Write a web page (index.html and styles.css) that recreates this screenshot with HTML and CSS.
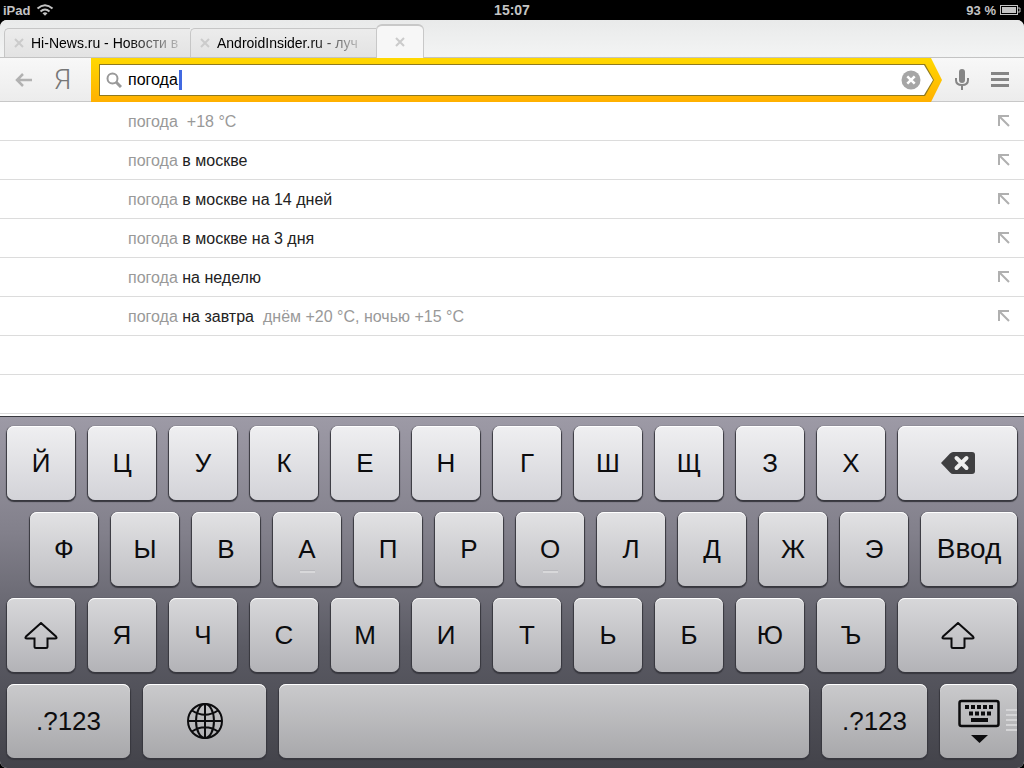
FILE: index.html
```html
<!DOCTYPE html>
<html lang="ru">
<head>
  <meta charset="UTF-8" />
  <meta name="viewport" content="width=device-width, initial-scale=1.0"/>
  <title>Новая вкладка</title>
  <link rel="stylesheet" href="styles.css">
</head>
<body>
  <header class="status">
    <div class="status-left">
      <span>iPad</span>
      <svg width="18" height="12" viewBox="0 0 18 12" fill="none" stroke="#c4c4c4" stroke-width="2">
        <path d="M1.500 4.500 Q9 -2 16.500 4.500"/>
        <path d="M4.500 7.500 Q9 3.500 13.500 7.500"/>
        <path d="M6.500 9.200 Q9 7.200 11.500 9.200 L9 11.800 Z" fill="#c4c4c4" stroke="none"/>
      </svg>
    </div>
    <div class="status-time">15:07</div>
    <div class="status-right">
      <span>93 %</span>
      <svg width="21" height="10" viewBox="0 0 21 10">
        <rect x="0.500" y="0.500" width="17" height="9" fill="none" stroke="#c4c4c4"/>
        <rect x="2" y="2" width="14" height="6" fill="#c4c4c4"/>
        <path d="M18 3h2v4h-2" fill="none" stroke="#c4c4c4"/>
      </svg>
    </div>
  </header>

  <main class="screen">
    <nav class="tabs">
      <div class="tab">
        <button class="tab-close" aria-label="Закрыть"><svg width="10" height="10" viewBox="0 0 10 10"><path d="M1 1l8 8M9 1l-8 8"/></svg></button>
        <a class="tab-title" href="#">Hi-News.ru - Новости в</a>
      </div>
      <div class="tab">
        <button class="tab-close" aria-label="Закрыть"><svg width="10" height="10" viewBox="0 0 10 10"><path d="M1 1l8 8M9 1l-8 8"/></svg></button>
        <a class="tab-title" href="#">AndroidInsider.ru - луч</a>
      </div>
      <div class="tab active">
        <button class="tab-close" aria-label="Закрыть"><svg width="10" height="10" viewBox="0 0 10 10"><path d="M1 1l8 8M9 1l-8 8"/></svg></button>
      </div>
    </nav>

    <form class="toolbar">
      <div class="nav-buttons">
        <button type="button" class="icon-btn" aria-label="Назад">
          <svg width="18" height="14" viewBox="0 0 18 14" fill="none" stroke="#b2b2b2" stroke-width="2.500"><path d="M17 7H2M8 1L2 7l6 6"/></svg>
        </button>
        <a class="logo" href="#">Я</a>
      </div>
      <div class="search-frame">
        <div class="search-line">
          <div class="search-box">
            <svg width="16" height="16" viewBox="0 0 16 16" fill="none" stroke="#999"><circle cx="6.500" cy="6.500" r="5" stroke-width="2"/><path d="M10 10l5 5" stroke-width="3"/></svg>
            <div class="search-field">
              <input class="search-input" type="text" aria-label="Поиск" value="погода">
              <span class="caret"></span>
            </div>
            <button type="reset" class="icon-btn" aria-label="Очистить">
              <svg width="20" height="20" viewBox="0 0 20 20"><circle cx="10" cy="10" r="9.500" fill="#a6a6a6"/><path d="M6.300 6.300l7.400 7.400M13.700 6.300l-7.400 7.400" stroke="#fff" stroke-width="2.500"/></svg>
            </button>
          </div>
        </div>
      </div>
      <div class="tools">
        <button type="button" class="icon-btn" aria-label="Голосовой поиск">
          <svg width="14" height="22" viewBox="0 0 14 22" fill="none" stroke="#858585"><rect x="4" y="0" width="6" height="14" rx="3" fill="#858585" stroke="none"/><path d="M1 9v2c0 3 2 5 6 5s6-2 6-5V9M7 16v5" stroke-width="2"/></svg>
        </button>
        <button type="button" class="icon-btn" aria-label="Меню">
          <svg width="18" height="15" viewBox="0 0 18 15" fill="#858585"><path d="M0 0h18v3H0zM0 6h18v3H0zM0 12h18v3H0z"/></svg>
        </button>
      </div>
    </form>

    <ul class="suggest">
      <li><a href="#"><span>погода</span><span class="hint">+18 °C</span><svg class="fill" width="12" height="12" viewBox="0 0 12 12"><path d="M1 11V1h10M1 1l10 10"/></svg></a></li>
      <li><a href="#"><span>погода <b>в москве</b></span><svg class="fill" width="12" height="12" viewBox="0 0 12 12"><path d="M1 11V1h10M1 1l10 10"/></svg></a></li>
      <li><a href="#"><span>погода <b>в москве на 14 дней</b></span><svg class="fill" width="12" height="12" viewBox="0 0 12 12"><path d="M1 11V1h10M1 1l10 10"/></svg></a></li>
      <li><a href="#"><span>погода <b>в москве на 3 дня</b></span><svg class="fill" width="12" height="12" viewBox="0 0 12 12"><path d="M1 11V1h10M1 1l10 10"/></svg></a></li>
      <li><a href="#"><span>погода <b>на неделю</b></span><svg class="fill" width="12" height="12" viewBox="0 0 12 12"><path d="M1 11V1h10M1 1l10 10"/></svg></a></li>
      <li><a href="#"><span>погода <b>на завтра</b></span><span class="hint">днём +20 °C, ночью +15 °C</span><svg class="fill" width="12" height="12" viewBox="0 0 12 12"><path d="M1 11V1h10M1 1l10 10"/></svg></a></li>
      <li></li>
      <li></li>
    </ul>

    <section class="keyboard">
      <div class="keys">
        <button class="key">Й</button>
        <button class="key">Ц</button>
        <button class="key">У</button>
        <button class="key">К</button>
        <button class="key">Е</button>
        <button class="key">Н</button>
        <button class="key">Г</button>
        <button class="key">Ш</button>
        <button class="key">Щ</button>
        <button class="key">З</button>
        <button class="key">Х</button>
        <button class="key wide" aria-label="Удалить">
          <svg width="34" height="22" viewBox="0 0 34 22"><path d="M0 11L9 1.500Q10.500 0 12 0H31q3 0 3 3v16q0 3-3 3H12q-1.500 0-3-1.500z" fill="#3f3f41"/><path d="M15.500 6l10 10M25.500 6l-10 10" stroke="#eee" stroke-width="4" stroke-linecap="round"/></svg>
        </button>
      </div>
      <div class="keys keys-home">
        <button class="key">Ф</button>
        <button class="key">Ы</button>
        <button class="key">В</button>
        <button class="key bump">А</button>
        <button class="key">П</button>
        <button class="key">Р</button>
        <button class="key bump">О</button>
        <button class="key">Л</button>
        <button class="key">Д</button>
        <button class="key">Ж</button>
        <button class="key">Э</button>
        <button class="key enter">Ввод</button>
      </div>
      <div class="keys keys-lower">
        <button class="key" aria-label="Shift">
          <svg width="34" height="27" viewBox="0 0 34 27"><path class="shift" d="M17 1L32 14.500Q33.500 16.500 31 16.500H23.500V24.500Q23.500 26 22 26H12Q10.500 26 10.500 24.500V16.500H3Q.5 16.500 2 14.500Z"/></svg>
        </button>
        <button class="key">Я</button>
        <button class="key">Ч</button>
        <button class="key">С</button>
        <button class="key">М</button>
        <button class="key">И</button>
        <button class="key">Т</button>
        <button class="key">Ь</button>
        <button class="key">Б</button>
        <button class="key">Ю</button>
        <button class="key">Ъ</button>
        <button class="key wide" aria-label="Shift">
          <svg width="34" height="27" viewBox="0 0 34 27"><path class="shift" d="M17 1L32 14.500Q33.500 16.500 31 16.500H23.500V24.500Q23.500 26 22 26H12Q10.500 26 10.500 24.500V16.500H3Q.5 16.500 2 14.500Z"/></svg>
        </button>
      </div>
      <div class="keys keys-bottom">
        <button class="key switch">.?123</button>
        <button class="key switch" aria-label="Язык">
          <svg width="36" height="36" viewBox="0 0 36 36" fill="none" stroke="#0c0c0e" stroke-width="2"><circle cx="18" cy="18" r="17"/><ellipse cx="18" cy="18" rx="9" ry="17"/><path d="M18 1v34M1 18h34M5 7.500Q18 16 31 7.500M5 28.500Q18 20 31 28.500"/></svg>
        </button>
        <button class="key space" aria-label="Пробел"></button>
        <button class="key switch-right">.?123</button>
        <button class="key hide" aria-label="Скрыть клавиатуру">
          <svg width="42" height="38" viewBox="0 0 42 38" fill="#0c0c0e" overflow="visible">
            <rect x="1.500" y="-1" width="39" height="25" rx="2" fill="none" stroke="#0c0c0e" stroke-width="2.500"/>
            <path d="M7 3h4v4H7zM13 3h4v4h-4zM19 3h4v4h-4zM25 3h4v4h-4zM31 3h4v4h-4zM11 9.500h4v4h-4zM17 9.500h4v4h-4zM23 9.500h4v4h-4zM29 9.500h4v4h-4zM13 16h17v4H13zM13 33h17l-8.500 8z"/>
          </svg>
          <span class="grip"></span>
        </button>
      </div>
    </section>
  </main>
</body>
</html>
```
FILE: styles.css
```css
* { box-sizing: border-box; }
body { margin: 0; min-height: 100vh; display: flex; flex-direction: column; background: #000; font-family: "Liberation Sans", Arial, sans-serif; font-size: 16px; }
button { border: 0; padding: 0; background: none; font: inherit; color: inherit; }
a { color: inherit; text-decoration: none; }
svg { display: block; flex: none; }

.status { height: 20px; padding: 0 3px; display: grid; grid-template-columns: 1fr auto 1fr; align-items: center; color: #c4c4c4; font-size: 13px; font-weight: bold; }
.status-left, .status-right { display: flex; align-items: center; gap: 6px; }
.status-right { justify-content: flex-end; gap: 4px; }
.status-time { font-size: 14px; }

.screen { flex: 1; display: flex; flex-direction: column; border-radius: 7px; overflow: hidden; background: #fff; }

.tabs { height: 38px; padding-left: 4px; display: flex; align-items: flex-end; background: linear-gradient(#e9eaea, #f3f4f4); border-bottom: 1px solid #c3c3c3; }
.tab { width: 186px; height: 29px; padding: 0 9px; display: flex; align-items: center; gap: 7px; border: 1px solid #c6c6c6; border-width: 1px 0 0 1px; border-radius: 5px 0 0 0; background: linear-gradient(#ececec, #e3e3e3); }
.tab-close svg { fill: none; stroke: #cbcbcb; stroke-width: 2; }
.tab-title { white-space: nowrap; font-size: 14px; line-height: 18px; color: #000; -webkit-mask-image: linear-gradient(to right, #000 65%, rgba(0, 0, 0, .2)); mask-image: linear-gradient(to right, #000 65%, rgba(0, 0, 0, .2)); }
.tab.active { width: 48px; height: 34px; margin-bottom: -1px; justify-content: center; border: 2px solid #c8c8c8; border-width: 2px 1px 0; border-radius: 6px 6px 0 0; background: #f7f7f7; }

.toolbar { height: 44px; display: flex; background: linear-gradient(#f8f8f8, #ececec); border-bottom: 1px solid #c8c8c8; }
.nav-buttons { width: 91px; padding-left: 15px; display: flex; align-items: center; gap: 21px; }
.icon-btn { display: flex; align-items: center; }
.logo { font-family: Roboto, "Liberation Sans", sans-serif; font-weight: 300; font-size: 28px; line-height: 32px; color: #777; }
.search-frame { flex: 1; height: 44px; padding: 6px 8px; background: linear-gradient(#ffd800, #ffb000); clip-path: polygon(0 0, calc(100% - 11px) 0, 100% 50%, calc(100% - 11px) 100%, 0 100%); }
.search-line { height: 32px; padding: 1px; background: #8f7a20; clip-path: polygon(0 0, calc(100% - 9px) 0, 100% 50%, calc(100% - 9px) 100%, 0 100%); }
.search-box { height: 30px; padding: 0 12px 0 6px; display: flex; align-items: center; gap: 6px; background: #fff; clip-path: polygon(0 0, calc(100% - 9px) 0, 100% 50%, calc(100% - 9px) 100%, 0 100%); }
.search-field { flex: 1; position: relative; }
.search-input { width: 100%; padding: 0; border: 0; outline: 0; font: inherit; color: #000; background: none; }
/* insertion point after the typed word */
.caret { position: absolute; left: 51px; top: -1px; width: 3px; height: 20px; background: #4169e1; }
.tools { width: 82px; padding: 0 15px 0 13px; display: flex; align-items: center; justify-content: space-between; }

.suggest { margin: 0; padding: 0; list-style: none; color: #999; }
.suggest li { height: 39px; border-bottom: 1px solid #dcdcdc; }
.suggest a { height: 38px; padding: 0 14px 0 128px; display: flex; align-items: center; gap: 9px; line-height: 38px; }
.suggest span { padding-top: 2px; }
.suggest b { font-weight: normal; color: #222; }
.fill { margin-left: auto; fill: none; stroke: #b0b0b0; stroke-width: 2; }

.keyboard { flex: 1; margin-top: 2px; padding: 9px 7px 10px; display: flex; flex-direction: column; gap: 12px; border-top: 1px solid #38383e; background: linear-gradient(#9d9aa6, #82808b 33%, #5a5a63 66%, #43434a); }
.keys { flex: 1; min-height: 74px; display: flex; gap: 13px; }
.keys-home { padding-left: 23px; }
.key { flex: 68 1 0; min-width: 0; position: relative; display: flex; align-items: center; justify-content: center; border-radius: 7px; font-size: 26px; color: #0c0c0e; background: linear-gradient(#efeff1, #d3d3d8); box-shadow: 0 1px 1px 1px #37373e, inset 0 1px 0 #fff; }
.keys-home .key { background: linear-gradient(#e2e2e4, #bfbfc3); }
.keys-lower .key { background: linear-gradient(#d8d8da, #b3b3b7); }
.keys-bottom .key { background: linear-gradient(#cacacc, #a8a8ab); }
.keys .wide { flex-grow: 119; }
.keys .enter { flex-grow: 96; font-size: 28px; }
.keys .switch { flex-grow: 123; }
.keys .space { flex-grow: 530; }
.keys .switch-right { flex-grow: 105; }
.keys .hide { flex-grow: 77; }
.shift { fill: none; stroke: #0c0c0e; stroke-width: 2; }
.bump::after { content: ""; position: absolute; left: 27px; bottom: 13px; width: 15px; height: 2px; border-top: 1px solid #bababe; background: #d8d8da; }
.grip { position: absolute; right: 0; top: 25px; width: 11px; height: 23px; background: repeating-linear-gradient(#d4d4d6 0 2px, transparent 2px 5px); }
```
